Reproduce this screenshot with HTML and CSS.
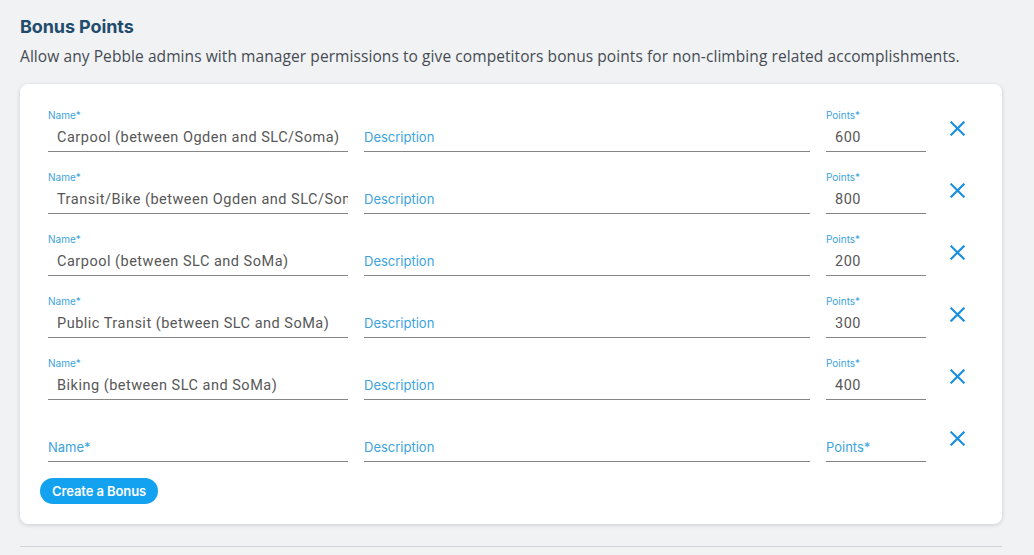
FILE: index.html
```html
<!DOCTYPE html>
<html>
<head>
<meta charset="utf-8">
<link rel="stylesheet" href="styles.css">
</head>
<body>
<div class="page">
  <h2 class="title">Bonus Points</h2>
  <p class="subtitle">Allow any Pebble admins with manager permissions to give competitors bonus points for non-climbing related accomplishments.</p>
  <div class="card">
    <div class="row">
      <div class="field f-name"><span class="label">Name*</span><div class="input"><span class="value">Carpool (between Ogden and SLC/Soma)</span></div></div>
      <div class="field f-desc"><span class="label"></span><div class="input"><span class="ph">Description</span></div></div>
      <div class="field f-points"><span class="label">Points*</span><div class="input"><span class="value">600</span></div></div>
      <button class="remove"><svg viewBox="0 0 16 16" width="16" height="16"><path d="M1.5 1.5L14.5 14.5M14.5 1.5L1.5 14.5"/></svg></button>
    </div>
    <div class="row">
      <div class="field f-name"><span class="label">Name*</span><div class="input"><span class="value">Transit/Bike (between Ogden and SLC/Soma)</span></div></div>
      <div class="field f-desc"><span class="label"></span><div class="input"><span class="ph">Description</span></div></div>
      <div class="field f-points"><span class="label">Points*</span><div class="input"><span class="value">800</span></div></div>
      <button class="remove"><svg viewBox="0 0 16 16" width="16" height="16"><path d="M1.5 1.5L14.5 14.5M14.5 1.5L1.5 14.5"/></svg></button>
    </div>
    <div class="row">
      <div class="field f-name"><span class="label">Name*</span><div class="input"><span class="value">Carpool (between SLC and SoMa)</span></div></div>
      <div class="field f-desc"><span class="label"></span><div class="input"><span class="ph">Description</span></div></div>
      <div class="field f-points"><span class="label">Points*</span><div class="input"><span class="value">200</span></div></div>
      <button class="remove"><svg viewBox="0 0 16 16" width="16" height="16"><path d="M1.5 1.5L14.5 14.5M14.5 1.5L1.5 14.5"/></svg></button>
    </div>
    <div class="row">
      <div class="field f-name"><span class="label">Name*</span><div class="input"><span class="value">Public Transit (between SLC and SoMa)</span></div></div>
      <div class="field f-desc"><span class="label"></span><div class="input"><span class="ph">Description</span></div></div>
      <div class="field f-points"><span class="label">Points*</span><div class="input"><span class="value">300</span></div></div>
      <button class="remove"><svg viewBox="0 0 16 16" width="16" height="16"><path d="M1.5 1.5L14.5 14.5M14.5 1.5L1.5 14.5"/></svg></button>
    </div>
    <div class="row">
      <div class="field f-name"><span class="label">Name*</span><div class="input"><span class="value">Biking (between SLC and SoMa)</span></div></div>
      <div class="field f-desc"><span class="label"></span><div class="input"><span class="ph">Description</span></div></div>
      <div class="field f-points"><span class="label">Points*</span><div class="input"><span class="value">400</span></div></div>
      <button class="remove"><svg viewBox="0 0 16 16" width="16" height="16"><path d="M1.5 1.5L14.5 14.5M14.5 1.5L1.5 14.5"/></svg></button>
    </div>
    <div class="row">
      <div class="field f-name"><span class="label"></span><div class="input"><span class="ph">Name*</span></div></div>
      <div class="field f-desc"><span class="label"></span><div class="input"><span class="ph">Description</span></div></div>
      <div class="field f-points"><span class="label"></span><div class="input"><span class="ph">Points*</span></div></div>
      <button class="remove"><svg viewBox="0 0 16 16" width="16" height="16"><path d="M1.5 1.5L14.5 14.5M14.5 1.5L1.5 14.5"/></svg></button>
    </div>
    <button class="create">Create a Bonus</button>
  </div>
  <div class="divider"></div>
</div>
</body>
</html>
```
FILE: styles.css
```css
* { box-sizing: border-box; }
html, body { margin: 0; padding: 0; }
body {
  background: #f1f2f4;
  font-family: "Open Sans", sans-serif;
  width: 1034px;
  height: 555px;
  overflow: hidden;
}
.page {
  padding: 16px 32px 0 20px;
}
.title {
  margin: 0;
  font-family: Inter, sans-serif;
  font-weight: 700;
  font-size: 18px;
  line-height: 22px;
  letter-spacing: -0.1px;
  color: #1f4b6c;
}
.subtitle {
  margin: 8px 0 0;
  font-size: 15.5px;
  line-height: 20px;
  letter-spacing: 0.08px;
  color: #454b53;
  white-space: nowrap;
}
.card {
  margin-top: 18px;
  background: #fff;
  border-radius: 8px;
  box-shadow: 0 1px 4px rgba(0,0,0,0.16);
  padding: 25px 30px 20px 20px;
  display: flex;
  flex-direction: column;
}
.row {
  display: flex;
  align-items: flex-start;
  gap: 16px;
  padding-left: 8px;
  margin-bottom: 19px;
}
.row:last-of-type { margin-bottom: 16px; }
.field {
  display: flex;
  flex-direction: column;
}
.f-name { width: 300px; }
.f-desc { flex: 1; }
.f-points { width: 100px; }
.label {
  display: block;
  height: 14px;
  font-family: Inter, sans-serif;
  font-size: 10px;
  line-height: 13px;
  color: #3ba3dd;
}
.input {
  height: 29px;
  border-bottom: 1px solid #858585;
  display: flex;
  align-items: center;
  overflow: hidden;
  white-space: nowrap;
}
.value {
  padding-left: 9px;
  font-family: Roboto, sans-serif;
  font-size: 14.5px;
  letter-spacing: 0.5px;
  color: #575757;
}
.ph {
  font-family: Inter, sans-serif;
  font-size: 13px;
  color: #3ba3dd;
}
.remove {
  width: 30px;
  height: 30px;
  margin-top: 4px;
  border: 0;
  background: transparent;
  padding: 0;
  display: flex;
  align-items: center;
  justify-content: center;
}
.remove svg { width: 15px; height: 15px; fill: none; stroke: #1a8fe0; stroke-width: 2.3; stroke-linecap: square; }
.create {
  align-self: flex-start;
  height: 26px;
  padding: 0 12px;
  border: 0;
  border-radius: 13px;
  background: #12a2f0;
  color: #fff;
  font-family: Inter, sans-serif;
  font-weight: 600;
  font-size: 13px;
  letter-spacing: -0.1px;
}
.divider {
  margin-top: 22px;
  height: 1px;
  background: #d0d6de;
}
```
